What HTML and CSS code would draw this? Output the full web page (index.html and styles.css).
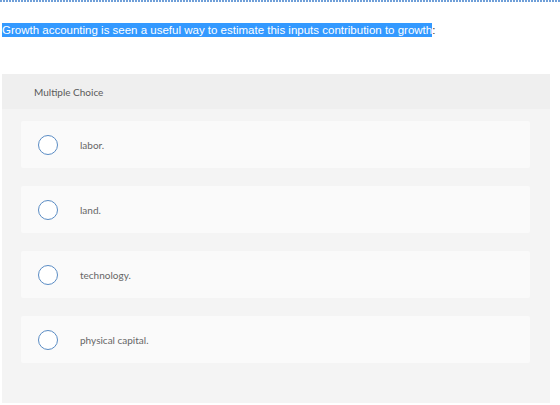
FILE: index.html
```html
<!DOCTYPE html>
<html>
<head>
<meta charset="utf-8">
<link rel="stylesheet" href="styles.css">
</head>
<body>
<div class="topline"></div>
<p class="question"><span class="sel">Growth accounting is seen a useful way to estimate this inputs contribution to growth</span>:</p>
<div class="panel">
  <div class="panel-header">Multiple Choice</div>
  <div class="options">
    <div class="option"><span class="radio"></span><span class="label">labor.</span></div>
    <div class="option"><span class="radio"></span><span class="label">land.</span></div>
    <div class="option"><span class="radio"></span><span class="label">technology.</span></div>
    <div class="option"><span class="radio"></span><span class="label">physical capital.</span></div>
  </div>
</div>
</body>
</html>
```

FILE: styles.css
```css
html, body {
  margin: 0;
  padding: 0;
  background: #ffffff;
}
.topline {
  height: 2px;
  background: repeating-linear-gradient(90deg, #6f9fd8 0 2px, #ffffff 2px 3px);
}
.question {
  margin: 21px 0 0 2px;
  font-family: "Liberation Sans", Arial, sans-serif;
  font-size: 11.5px;
  line-height: 15px;
  color: #333333;
}
.sel {
  background: #3399ff;
  color: #ffffff;
  padding: 1px 0;
}
.panel {
  margin: 36px 10px 0 2px;
  height: 329px;
  background: #f4f4f4;
  display: flex;
  flex-direction: column;
}
.panel-header {
  height: 35px;
  background: #efefef;
  display: flex;
  align-items: center;
  padding-left: 32px;
  font-family: Lato, "Open Sans", sans-serif;
  font-size: 10px;
  color: #5a5a5a;
}
.options {
  padding: 12px 20px 0 19px;
  display: flex;
  flex-direction: column;
  gap: 18px;
}
.option {
  height: 47px;
  background: #fafafa;
  border-radius: 2px;
  display: flex;
  align-items: center;
  padding-left: 17px;
}
.radio {
  width: 18px;
  height: 18px;
  border: 1.5px solid #5a8cc4;
  border-radius: 50%;
  background: #ffffff;
  flex: none;
}
.label {
  margin-left: 22px;
  font-family: Lato, "Open Sans", sans-serif;
  font-size: 10px;
  color: #666666;
}
```
